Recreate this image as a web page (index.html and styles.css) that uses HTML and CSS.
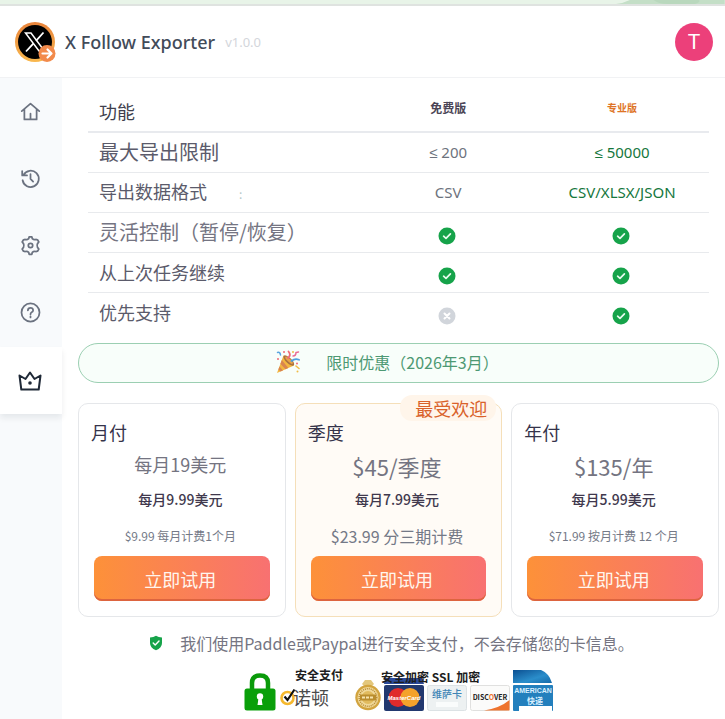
FILE: index.html
```html
<!DOCTYPE html>
<html lang="zh-CN">
<head>
<meta charset="utf-8">
<meta name="viewport" content="width=device-width, initial-scale=1">
<title>X Follow Exporter</title>
<link rel="stylesheet" href="styles.css">
</head>
<body>
<svg class="sprite" aria-hidden="true">
  <symbol id="ok" viewBox="0 0 18 18"><circle cx="9" cy="9" r="8.5" fill="#16a34a"/><path d="M5.6 9.2 8 11.4 12.4 6.9" fill="none" stroke="#e9fbef" stroke-width="1.7" stroke-linecap="round" stroke-linejoin="round"/></symbol>
  <symbol id="no" viewBox="0 0 18 18"><circle cx="9" cy="9" r="8.5" fill="#d1d5db"/><path d="M6.5 6.5 11.5 11.5M11.5 6.5 6.5 11.5" fill="none" stroke="#fff" stroke-width="2" stroke-linecap="round"/></symbol>
</svg>

<div class="page-strip">
  <svg viewBox="0 0 110 4" preserveAspectRatio="none" aria-hidden="true"><path d="M0 4Q8 3 14 0H110V4Z" fill="#c4dfc7"/><path d="M38 0Q43 4 52 4H80Q86 2 84 0Z" fill="#b9d8bd"/></svg>
</div>

<header class="topbar">
  <svg class="logo" viewBox="0 0 42 42" aria-hidden="true">
    <defs><linearGradient id="ring" x1="0" y1="0" x2="0" y2="1"><stop offset="0" stop-color="#e8833a"/><stop offset="1" stop-color="#f9b84e"/></linearGradient></defs>
    <circle cx="20" cy="21" r="20" fill="url(#ring)"/>
    <circle cx="20" cy="21" r="17" fill="#000"/>
    <path d="M10.500 12H16L29.500 30H24Z" fill="#000" stroke="#fff" stroke-width="1.500"/>
    <path d="M28.500 11.500 21 19.800M18.300 22.600 11 30.500" stroke="#fff" stroke-width="1.800" fill="none"/>
    <circle cx="32" cy="32.500" r="8.500" fill="#f28a4b"/>
    <path d="M27.500 32.500H36M32.500 28.500 36.500 32.500 32.500 36.500" fill="none" stroke="#fff" stroke-width="2.200" stroke-linecap="round" stroke-linejoin="round"/>
  </svg>
  <h1 class="brand">X Follow Exporter</h1>
  <span class="version">v1.0.0</span>
  <button class="avatar" type="button" aria-label="T">T</button>
</header>

<div class="shell">
  <nav class="sidebar">
    <a class="nav-item" href="#home" aria-label="Home"><svg viewBox="0 0 24 24"><path d="M2 11.500 12 3 22 11.500M5 9.500V21H19V9.500M12 21V14.500"/></svg></a>
    <a class="nav-item" href="#history" aria-label="History"><svg viewBox="0 0 24 24"><path d="M4 8A9.300 9.300 0 1 1 3 14M2.500 3.500V8.500H8M12 7V12.500L15 15.500"/></svg></a>
    <a class="nav-item" href="#settings" aria-label="Settings"><svg viewBox="0 0 24 24"><path d="M9.900 4.200 10.500 2H13.500L14.100 4.200Q15.800 6 18 5.100L20 5.500 21.500 8 20 9.900Q19 12 20 14.100L21.500 16 20 18.500 18 18.900Q15.800 18 14.100 19.800L13.500 22H10.500L9.900 19.800Q8.200 18 6 18.900L4 18.500 2.500 16 4 14.100Q5 12 4 9.900L2.500 8 4 5.500 6 5.100Q8.200 6 9.900 4.200Z"/><circle cx="12" cy="12" r="2.500"/></svg></a>
    <a class="nav-item" href="#help" aria-label="Help"><svg viewBox="0 0 24 24"><circle cx="12" cy="12" r="10.300"/><path d="M9 9.500Q9.200 6.800 12 6.800T15 9.300Q15 10.800 13.300 11.700 12 12.400 12 14M12 16.300V17.600"/></svg></a>
    <a class="nav-item nav-item--active" href="#pro" aria-label="Pro" aria-current="page"><svg viewBox="0 0 24 24"><path d="M3.300 20.500 1.500 6.500 7.500 10 12 3.500 16.500 10 22.500 6.500 20.700 20.500Z"/><circle class="dot" cx="12" cy="14" r="1.800"/></svg></a>
  </nav>

  <main class="content">
    <table class="compare">
      <thead>
        <tr><th scope="col">功能</th><th scope="col">免费版</th><th scope="col" class="pro">专业版</th></tr>
      </thead>
      <tbody>
        <tr><th scope="row" class="large">最大导出限制</th><td>≤ 200</td><td class="pro">≤ 50000</td></tr>
        <tr><th scope="row">导出数据格式<span class="colon">:</span></th><td>CSV</td><td class="pro">CSV/XLSX/JSON</td></tr>
        <tr><th scope="row" class="large light">灵活控制（暂停/恢复）</th><td class="mark"><svg role="img" aria-label="✓"><use href="#ok"/></svg></td><td class="mark"><svg role="img" aria-label="✓"><use href="#ok"/></svg></td></tr>
        <tr><th scope="row">从上次任务继续</th><td class="mark"><svg role="img" aria-label="✓"><use href="#ok"/></svg></td><td class="mark"><svg role="img" aria-label="✓"><use href="#ok"/></svg></td></tr>
        <tr><th scope="row">优先支持</th><td class="mark"><svg role="img" aria-label="✕"><use href="#no"/></svg></td><td class="mark"><svg role="img" aria-label="✓"><use href="#ok"/></svg></td></tr>
      </tbody>
    </table>

    <p class="banner">
      <svg class="party" viewBox="0 0 24 24" aria-hidden="true">
        <path d="M1 23 7.500 5.500Q13 7 18 15.500Z" fill="#f3b640"/>
        <path d="M5.800 10 12.300 18 9.500 19.300 4.400 13.800ZM3.500 16.500 7 20.400 4.500 21.500 2.400 19.500Z" fill="#d98550"/>
        <ellipse cx="12.800" cy="10.500" rx="7" ry="2.800" transform="rotate(44 12.800 10.500)" fill="#a9713f"/>
        <ellipse cx="13" cy="10.200" rx="5" ry="1.500" transform="rotate(44 13 10.200)" fill="#e8a34a"/>
        <path d="M12 8Q15.500 5 12.500 1.500" fill="none" stroke="#ef6a76" stroke-width="1.800" stroke-linecap="round"/>
        <path d="M15.500 11Q19 8 23 9.800" fill="none" stroke="#4f9fe0" stroke-width="1.800" stroke-linecap="round"/>
        <path d="M1.500 2.500Q4 1.500 4.500 5" fill="none" stroke="#5aa5df" stroke-width="1.500" stroke-linecap="round"/>
        <path d="M17 6Q20 6 20 2.500L22.500 2" fill="none" stroke="#e86a95" stroke-width="1.500" stroke-linecap="round"/>
        <path d="M20 16 23 18.500" stroke="#f0bd49" stroke-width="1.600" stroke-linecap="round"/>
        <g fill="#ef6a76"><circle cx="8" cy="2" r="1"/><circle cx="21" cy="13.500" r="1"/><circle cx="2" cy="9" r="1"/></g>
        <g fill="#f0bd49"><circle cx="17" cy="2" r="1"/><circle cx="21.500" cy="21.500" r="1"/></g>
      </svg>
      <span>限时优惠（2026年3月）</span>
    </p>

    <section class="plans">
      <article class="plan">
        <h2>月付</h2>
        <p class="price price--text">每月19美元</p>
        <p class="monthly">每月9.99美元</p>
        <p class="note">$9.99 每月计费1个月</p>
        <button class="try" type="button">立即试用</button>
      </article>
      <article class="plan plan--featured">
        <span class="badge">最受欢迎</span>
        <h2>季度</h2>
        <p class="price">$45/季度</p>
        <p class="monthly">每月7.99美元</p>
        <p class="note note--large">$23.99 分三期计费</p>
        <button class="try" type="button">立即试用</button>
      </article>
      <article class="plan">
        <h2>年付</h2>
        <p class="price">$135/年</p>
        <p class="monthly">每月5.99美元</p>
        <p class="note">$71.99 按月计费 12 个月</p>
        <button class="try" type="button">立即试用</button>
      </article>
    </section>

    <p class="secure">
      <svg viewBox="0 0 14 16" aria-hidden="true"><path d="M7 .8Q9.500 2.500 13 2.600V8Q13 13 7 15.300 1 13 1 8V2.600Q4.500 2.500 7 .8Z" fill="#16a34a"/><path d="M4.200 8 6.200 10 10 5.900" fill="none" stroke="#fff" stroke-width="1.400" stroke-linecap="round" stroke-linejoin="round"/></svg>
      <span>我们使用Paddle或Paypal进行安全支付，不会存储您的卡信息。</span>
    </p>

    <div class="trust">
      <svg class="lock" viewBox="0 0 32 38" aria-hidden="true"><path d="M8 17V10Q8 2.500 16 2.500T24 10V17" fill="none" stroke="#0a9a0a" stroke-width="4.500"/><rect x="0.500" y="15.500" width="31" height="22" rx="2.500" fill="#0a9f0a"/><circle cx="16" cy="23.500" r="3.200" fill="#fff"/><path d="M14.500 25H17.500L18.500 32H13.500Z" fill="#fff"/></svg>
      <div class="norton">
        <strong>安全支付</strong>
        <span class="norton-name"><svg viewBox="0 0 16 18" aria-hidden="true"><circle cx="7.500" cy="10" r="6" fill="none" stroke="#f5b82e" stroke-width="2.600"/><path d="M4.500 8.500 7.500 12 14.500 1.500" fill="none" stroke="#111" stroke-width="2.200"/></svg>诺顿</span>
      </div>
      <div class="payments">
        <strong>安全加密 SSL 加密</strong>
        <svg class="seal" viewBox="0 0 26 32" aria-hidden="true"><path d="M7 5 10 1H16L19 5 16 8H10Z" fill="#e3c77c"/><circle cx="13" cy="18.500" r="12.700" fill="#d2a43f"/><circle cx="13" cy="18.500" r="10.500" fill="#f0d99a"/><circle cx="13" cy="18.500" r="8.800" fill="none" stroke="#b78a34" stroke-width="1.500" stroke-dasharray="1 1"/><circle cx="13" cy="18.500" r="6.500" fill="#e1bb5e"/><rect x="5" y="15.500" width="16" height="6" fill="#b98d2e"/><path d="M7 18.500H19" stroke="#f6e3ad" stroke-width="2" stroke-dasharray="3 1"/></svg>
        <svg class="card" viewBox="0 0 40 42" role="img" aria-label="MasterCard"><path d="M1 9H38L40 15H0Z" fill="#2b4a9a"/><rect y="16" width="40" height="26" rx="2" fill="#22386f"/><circle cx="14" cy="28.500" r="9.500" fill="#e02b2b"/><circle cx="26" cy="28.500" r="9.500" fill="#f4a22b"/><text x="20" y="31" text-anchor="middle" font-family="Liberation Sans" font-size="6" font-weight="700" font-style="italic" fill="#fff">MasterCard</text></svg>
        <svg class="card" viewBox="0 0 40 42" role="img" aria-label="维萨卡"><rect x=".5" y="16.500" width="39" height="25" rx="2" fill="#edf1f2" stroke="#dce2e5"/><rect x="9" y="33" width="22" height="5" fill="#fafcfc"/><text x="20" y="29" text-anchor="middle" font-size="10" font-weight="500" fill="#3f85b6">维萨卡</text></svg>
        <svg class="card" viewBox="0 0 40 42" role="img" aria-label="Discover"><rect x=".5" y="16.500" width="39" height="25" rx="2" fill="#fbfbfa" stroke="#e0e0df"/><path d="M39.500 31V41.500H14Q30 39 39.500 31Z" fill="#ee732d"/><text x="20" y="30.500" text-anchor="middle" font-size="7" font-weight="700" fill="#1d1d1d">DISC<tspan fill="#ee732d">O</tspan>VER</text></svg>
        <svg class="card" viewBox="0 0 40 42" role="img" aria-label="American 快递"><defs><linearGradient id="amex" x1="0" y1="0" x2="1" y2="1"><stop offset="0" stop-color="#0b4f91"/><stop offset=".6" stop-color="#2b8ecb"/><stop offset="1" stop-color="#166aa9"/></linearGradient></defs><path d="M0 1H28Q36 4 39 14H0Z" fill="url(#amex)"/><rect y="16" width="40" height="26" rx="1" fill="#237fbd"/><rect x="6" y="37" width="33" height="5" fill="#fff"/><text x="20" y="24" text-anchor="middle" font-family="Liberation Sans" font-size="7" font-weight="700" fill="#d9efff">AMERICAN</text><text x="22" y="35" text-anchor="middle" font-size="8" font-weight="700" fill="#d9efff">快递</text></svg>
      </div>
    </div>
  </main>
</div>
</body>
</html>
```
FILE: styles.css
```css
* { box-sizing: border-box; }

body {
  margin: 0;
  min-height: 100vh;
  display: flex;
  flex-direction: column;
  background: #fff;
  color: #374151;
  font-family: "Noto Sans CJK SC", sans-serif;
}

h1, h2, p { margin: 0; }
button { border: 0; padding: 0; font-family: inherit; cursor: pointer; }
svg { display: block; flex: none; }
.sprite { position: absolute; width: 0; height: 0; }

.page-strip {
  height: 6px;
  display: flex;
  justify-content: flex-end;
  background: #e8f4e8;
  border-bottom: 2px solid #dfe3e0;
}
.page-strip svg { width: 15%; height: 4px; }

.topbar {
  display: flex;
  align-items: center;
  gap: 10px;
  height: 72px;
  padding: 0 12px 0 15px;
  border-bottom: 1px solid #f1f2f4;
  font-family: "Noto Sans", sans-serif;
}
.logo { width: 42px; height: 42px; margin-right: -2px; }
.brand { font-size: 18px; line-height: 24px; font-weight: 500; color: #424b59; }
.version { font-size: 13px; line-height: 24px; color: #d3d6db; }
.avatar {
  width: 38px;
  height: 38px;
  margin-left: auto;
  border-radius: 50%;
  background: #ec407a;
  color: #fff;
  font-family: Roboto, sans-serif;
  font-size: 21px;
}

.shell { flex: 1; display: flex; }

.sidebar { width: 62px; flex: none; background: #f8fafc; }
.nav-item {
  height: 67px;
  display: flex;
  align-items: center;
  justify-content: center;
  padding-right: 2px;
}
.nav-item svg {
  width: 21px;
  height: 21px;
  fill: none;
  stroke: #6b7280;
  stroke-width: 2;
  stroke-linecap: round;
  stroke-linejoin: round;
}
.nav-item--active { margin-top: 1px; background: #fff; box-shadow: 0 4px 6px rgba(15, 23, 42, .08); }
.nav-item--active svg { width: 24px; height: 24px; stroke: #1f2937; }
.nav-item .dot { fill: #1f2937; stroke: none; }

.content { flex: 1; min-width: 0; padding: 7px 6px 8px 16px; }

.compare {
  width: calc(100% - 20px);
  margin: 0 10px;
  border-collapse: collapse;
  table-layout: fixed;
}
.compare th, .compare td {
  height: 40px;
  padding: 0;
  line-height: 28px;
  text-align: center;
  border-bottom: 1px solid #e8eaed;
}
.compare thead th {
  width: 28%;
  height: 47px;
  border-bottom: 2px solid #e8eaee;
  font-size: 12px;
  font-weight: 700;
  color: #4b4556;
}
.compare th:first-child {
  width: 44%;
  padding-left: 11px;
  text-align: left;
  font-size: 18px;
  font-weight: 400;
  color: #5b5b6b;
}
.compare thead th:first-child { padding-top: 6px; color: #3f3f4d; }
.compare th.large:first-child { font-size: 20px; }
.compare th.light:first-child { color: #747482; }
.compare tbody tr:last-child > * { border-bottom: 0; }
.compare td {
  font-family: "Noto Sans", sans-serif;
  font-size: 15px;
  font-weight: 400;
  color: #6d737d;
}
.compare td.pro { color: #15773d; }
.compare thead .pro { font-size: 10px; color: #de7426; }
.compare .mark { padding: 8px 3px 0 0; }
.compare .mark svg { width: 18px; height: 18px; margin: 0 auto; }
.colon { margin-left: 32px; font-size: 12px; color: #b5c7c9; }

.banner {
  display: flex;
  align-items: center;
  justify-content: center;
  gap: 26px;
  height: 40px;
  margin-top: 11px;
  padding: 0 22px 2px 0;
  border: 1px solid #9bcfb2;
  border-radius: 20px;
  background: #f8fefa;
  color: #4d9973;
  font-size: 16px;
  line-height: 24px;
}
.party { width: 24px; height: 24px; }

.plans {
  display: grid;
  grid-template-columns: repeat(3, 1fr);
  gap: 9px;
  margin-top: 20px;
}
.plan {
  position: relative;
  display: flex;
  flex-direction: column;
  padding: 14px 15px 15px;
  border: 1px solid #e5e7ea;
  border-radius: 10px;
  text-align: center;
}
.plan--featured { background: #fffbf6; border-color: #f5dfb9; }
.plan h2 {
  margin-left: -3px;
  text-align: left;
  font-size: 18px;
  line-height: 28px;
  font-weight: 400;
  color: #35334a;
}
.plan p { padding-right: 3px; }
.price { font-size: 22px; line-height: 40px; color: #747481; }
.price--text { font-size: 18px; line-height: 36px; padding-bottom: 4px; }
.monthly { font-size: 14px; line-height: 26px; font-weight: 500; color: #40384d; }
.note { margin: 12px 0 8px; font-size: 12px; line-height: 24px; color: #747987; }
.note--large { font-size: 16px; }
.try {
  height: 45px;
  padding-right: 3px;
  border-radius: 8px;
  background: linear-gradient(90deg, #fd9139, #f87171);
  box-shadow: inset 0 -2px 0 #dd643f;
  color: #fff6ee;
  font-size: 18px;
  line-height: 24px;
}
.badge {
  position: absolute;
  top: -9px;
  right: 5px;
  padding: 0 9px 0 15px;
  border-radius: 12px;
  background: #fff5ea;
  color: #d9622b;
  font-size: 18px;
  line-height: 26px;
}

.secure {
  display: flex;
  align-items: center;
  justify-content: center;
  gap: 17px;
  margin-top: 14px;
  padding-right: 14px;
  font-size: 16px;
  line-height: 24px;
  color: #757582;
}
.secure svg { width: 14px; height: 16px; }

.trust {
  display: flex;
  align-items: flex-end;
  justify-content: center;
  gap: 4px;
  margin-top: 12px;
  color: #1d1d1d;
}
.trust strong { font-size: 12px; line-height: 16px; font-weight: 700; }
.lock { width: 32px; height: 38px; }
.norton {
  display: flex;
  flex-direction: column;
  align-items: flex-end;
  margin-right: 8px;
}
.norton-name { display: flex; align-items: center; font-size: 18px; line-height: 28px; color: #4b4b4b; padding-right: 14px; }
.norton-name svg { width: 16px; height: 18px; margin-right: -3px; }
.payments { position: relative; display: flex; align-items: flex-end; gap: 3px; }
.payments strong { position: absolute; top: 0; left: 26px; white-space: nowrap; }
.seal { width: 26px; height: 32px; }
.card { width: 40px; height: 42px; }
```
